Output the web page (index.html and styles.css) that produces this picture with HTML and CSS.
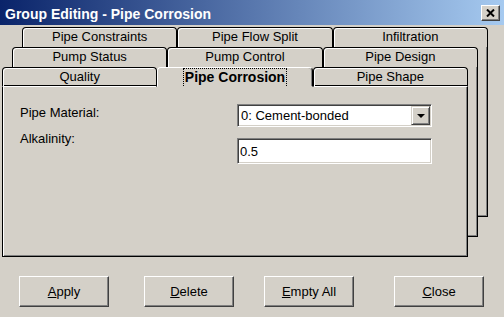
FILE: index.html
```html
<!DOCTYPE html>
<html lang="en">
<head>
  <meta charset="UTF-8" />
  <title>Group Editing - Pipe Corrosion</title>
  <link rel="stylesheet" href="styles.css">
</head>
<body>

  <div class="window">
    <div class="titlebar">
      <span class="title">Group Editing - Pipe Corrosion</span>
      <span class="close-btn">
        <svg width="9" height="8" viewBox="0 0 9 8"><path d="M1 0.5 L8 7.5 M8 0.5 L1 7.5" stroke="#000" stroke-width="2"/></svg>
      </span>
    </div>

    <div class="sheets">
      <div class="sheet sheet-back">
        <div class="tabs">
          <div class="tab">Pipe Constraints</div>
          <div class="tab">Pipe Flow Split</div>
          <div class="tab">Infiltration</div>
        </div>
        <div class="page"></div>
      </div>

      <div class="sheet sheet-mid">
        <div class="tabs">
          <div class="tab">Pump Status</div>
          <div class="tab">Pump Control</div>
          <div class="tab">Pipe Design</div>
        </div>
        <div class="page"></div>
      </div>

      <div class="sheet sheet-front">
        <div class="tabs">
          <div class="tab front">Quality</div>
          <div class="tab selected"><span class="focus">Pipe Corrosion</span></div>
          <div class="tab front">Pipe Shape</div>
        </div>
        <div class="page">
          <div class="form">
            <div class="labels">
              <label>Pipe Material:</label>
              <label>Alkalinity:</label>
            </div>
            <div class="fields">
              <div class="combo">
                <span class="combo-text">0: Cement-bonded</span>
                <span class="combo-btn"><span class="arrow"></span></span>
              </div>
              <input class="field" type="text" value="0.5" />
            </div>
          </div>
        </div>
      </div>
    </div>

    <div class="buttons">
      <button><u>A</u>pply</button>
      <button><u>D</u>elete</button>
      <button><u>E</u>mpty All</button>
      <button><u>C</u>lose</button>
    </div>
  </div>

</body>
</html>
```

FILE: styles.css
```css
body {
  margin: 0;
  padding: 0;
  background: #d4d0c8;
  font-family: 'Liberation Sans', Arial, sans-serif;
  font-size: 13px;
  color: #000;
}

.window {
  width: 504px;
  height: 317px;
  background: #d4d0c8;
}

.titlebar {
  height: 25px;
  box-sizing: border-box;
  padding: 5px 4px 0 5px;
  display: flex;
  justify-content: space-between;
  align-items: flex-start;
  background: linear-gradient(to right, #0a246a, #a6caf0);
}

.title {
  color: #fff;
  font-weight: bold;
  font-size: 14px;
  line-height: 18px;
}

.close-btn {
  width: 19px;
  height: 16px;
  box-sizing: border-box;
  background: #d4d0c8;
  border: 1px solid;
  border-color: #fff #404040 #404040 #fff;
  box-shadow: inset -1px -1px #808080;
  display: flex;
  align-items: center;
  justify-content: center;
}

/* stacked tab sheets */
.sheets {
  display: grid;
  margin-top: 2px;
  padding-left: 2px;
}

.sheet {
  grid-area: 1 / 1;
  width: 466px;
  align-self: start;
}

.sheet-back { margin-left: 20px; }
.sheet-mid { margin-left: 10px; margin-top: 20px; }
.sheet-front { margin-top: 40px; }

.tabs {
  display: flex;
  height: 20px;
}

.tab {
  flex: 1;
  box-sizing: border-box;
  height: 20px;
  border: 1px solid #000;
  border-bottom: none;
  border-radius: 4px 4px 0 0;
  box-shadow: inset 1px 1px #fff;
  background: #d4d0c8;
  text-align: center;
  line-height: 18px;
  white-space: nowrap;
}

.tab.front {
  border-bottom: 1px solid #fff;
  box-shadow: inset 1px 1px #fff, inset 0 -1px #000;
}

.tab.selected {
  border-color: #fff #000 transparent #fff;
  border-bottom: 1px solid transparent;
  box-shadow: inset -1px 0 #808080;
  font-weight: bold;
  font-size: 14px;
}

.focus {
  display: inline-block;
  padding: 0 1px;
  line-height: 17px;
  border: 1px dotted #000;
  border-bottom-width: 0;
}

.page {
  height: 170px;
  box-sizing: border-box;
  background: #d4d0c8;
  border-left: 1px solid #000;
  border-right: 1px solid #000;
  border-bottom: 1px solid #000;
  box-shadow: inset 1px 0 #fff, inset -1px -1px #808080;
}

.form {
  display: grid;
  grid-template-columns: 217px 195px;
  padding: 17px 0 0 17px;
}

.labels {
  display: flex;
  flex-direction: column;
  gap: 11px;
  padding-top: 1px;
}

label {
  line-height: 15px;
}

.fields {
  display: flex;
  flex-direction: column;
  gap: 11px;
}

.combo, .field {
  width: 195px;
  box-sizing: border-box;
  background: #fff;
  border: 1px solid;
  border-color: #808080 #fff #fff #808080;
  box-shadow: inset 1px 1px #404040, inset -1px -1px #d4d0c8;
}

.combo {
  height: 23px;
  display: flex;
  justify-content: space-between;
  padding: 1px;
}

.combo-text {
  line-height: 19px;
  padding-left: 2px;
}

.combo-btn {
  width: 19px;
  height: 19px;
  box-sizing: border-box;
  background: #d4d0c8;
  border: 1px solid;
  border-color: #d4d0c8 #404040 #404040 #d4d0c8;
  box-shadow: inset 1px 1px #fff, inset -1px -1px #808080;
  display: flex;
  align-items: center;
  justify-content: center;
}

.arrow {
  width: 0;
  height: 0;
  border-left: 4px solid transparent;
  border-right: 4px solid transparent;
  border-top: 4px solid #000;
}

.field {
  height: 26px;
  padding: 0 2px;
  font-family: inherit;
  font-size: 13px;
  color: #000;
  outline: none;
}

.buttons {
  display: grid;
  grid-template-columns: 125px 120px 130px 90px;
  padding-left: 19px;
  margin-top: 19px;
}

button {
  width: 90px;
  height: 31px;
  padding: 0;
  background: #d4d0c8;
  font-family: inherit;
  font-size: 13px;
  color: #000;
  border: 1px solid;
  border-color: #fff #404040 #404040 #fff;
  box-shadow: inset -1px -1px #808080;
}
```
